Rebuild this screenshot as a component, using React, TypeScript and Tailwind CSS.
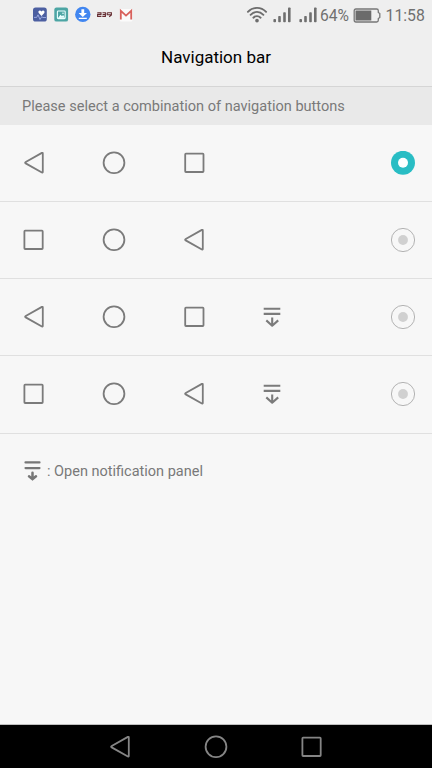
import React from "react";

type Kind = "back" | "home" | "recent" | "recentLeft" | "panel";

function Icon({ kind }: { kind: Kind }) {
  return (
    <svg
      viewBox="0 0 24 24"
      className="h-6 w-6 shrink-0"
      fill="none"
      stroke="currentColor"
      strokeWidth="1.8"
      strokeLinejoin="round"
      strokeLinecap="round"
    >
      {kind === "back" && <path d="M19.9 1.9 L3.7 11 Q2.5 11.7 3.7 12.4 L19.9 21.5 Q20.8 21.8 20.8 21 V2.4 Q20.8 1.6 19.9 1.9Z" />}
      {kind === "home" && <circle cx="12" cy="11.8" r="10.4" />}
      {kind === "recent" && <rect x="3.2" y="2.7" width="18.3" height="18.3" rx="0.7" />}
      {kind === "recentLeft" && <rect x="2.4" y="2.7" width="18.3" height="18.3" rx="0.7" />}
      {kind === "panel" && (
        <path strokeLinecap="butt" strokeWidth="2.1" d="M3.7 3.7 H20.3 M3.7 8.9 H20.3 M12.2 12.4 V21 M6.3 15.4 L12.2 20.7 L18.2 15.4" />
      )}
    </svg>
  );
}

function Radio({ on }: { on?: boolean }) {
  return (
    <svg viewBox="0 0 24 24" className="ml-auto h-6 w-6 shrink-0">
      {on ? (
        <>
          <circle cx="12" cy="11.8" r="12" fill="#29bdc4" />
          <circle cx="12" cy="11.8" r="5" fill="#fcffff" />
        </>
      ) : (
        <>
          <circle cx="12" cy="12" r="11.6" fill="none" stroke="#aaaaaa" strokeWidth="0.9" />
          <circle cx="12" cy="12" r="4.9" fill="#d0d0d0" />
        </>
      )}
    </svg>
  );
}

function Row({ icons, on, className = "h-[77px]" }: { icons: Kind[]; on?: boolean; className?: string }) {
  return (
    <div className={`flex shrink-0 items-center border-b border-[#e0e0e0] pr-[17px] pl-[22px] text-[#7b7b7b] ${className}`}>
      <div className="flex gap-14">
        {icons.map((k, i) => (
          <span key={i} className={i === 3 ? "-ml-0.5" : ""}>
            <Icon kind={k} />
          </span>
        ))}
      </div>
      <Radio on={on} />
    </div>
  );
}

function Signal({ className }: { className: string }) {
  return (
    <svg viewBox="0 0 18 16" className={`h-4 w-[18px] ${className}`} fill="#6f6f6f">
      <rect x="0.4" y="11.9" width="2.6" height="3.3" rx=".8" />
      <rect x="5.2" y="9" width="2.6" height="6.2" rx=".8" />
      <rect x="10.2" y="5.2" width="2.6" height="10" rx=".8" />
      <rect x="15" y="0.5" width="2.6" height="14.7" rx=".8" />
    </svg>
  );
}

function StatusBar() {
  return (
    <div className="flex h-[30px] items-center pl-8 text-[#707070]">
      <svg viewBox="0 0 110 20" className="h-5 w-[110px]">
        <rect x="1" y="2.6" width="13.8" height="14" rx="2.6" fill="#4c5fa1" />
        <path d="M9.5 11 L6.7 8.1 C5.4 5.7 8.3 4.6 9.5 6.5 C10.7 4.6 13.4 5.7 12.3 8Z" fill="#fff" />
        <path d="M2 12.4 H4.7 L6 9.8 L8 14.5 L9.7 11.7 L11 12.5 H14" stroke="#aab9ed" strokeWidth=".8" fill="none" />
        <rect x="22.3" y="2.6" width="13.8" height="14" rx="2.2" fill="#4ca5a4" />
        <rect x="25.4" y="6" width="7.8" height="7.6" rx=".8" fill="none" stroke="#eaffff" strokeWidth="1.1" />
        <path d="M26 13 L28.5 9.7 L30 11.3 L31.1 10 L33 12.7Z" fill="#eaffff" />
        <circle cx="31" cy="8.2" r=".8" fill="#eaffff" />
        <circle cx="50.8" cy="9.4" r="7.7" fill="#4186f0" />
        <path d="M49.4 4.3 H52.2 V8 H55 L50.8 12 L46.6 8 H49.4Z M46.8 12.8 H54.8 V14 H46.8Z" fill="#fff" />
        <g stroke="#652c31" strokeWidth="1.1" fill="none">
          <path d="M65.3 7.7 H69 V9.4 H65.6 V11.4 H69.4 M70.5 7.7 H73.4 V11.4 H70.3 M70.6 9.5 H73" />
          <path d="M75.2 7.7 H79.4 V10 L77.2 11.7 M75.2 7.7 V9.7 H79" />
        </g>
        <rect x="87.8" y="4" width="12.5" height="12.4" rx="1.2" fill="#fbfbfb" />
        <path d="M88.8 14.4 V5.8 L94 10.6 L99.2 5.8 V14.4" fill="none" stroke="#d8615c" strokeWidth="1.8" />
      </svg>
      <svg viewBox="0 0 22 18" className="ml-[104px] h-[18px] w-[22px]" fill="none" stroke="#6d6d6d" strokeWidth="1.9" strokeLinecap="round">
        <path d="M1.9 5.8 C7 .5 15 .5 20.1 5.8 M4.6 8.8 C8.4 4.9 13.6 4.9 17.4 8.8 M7.4 11.7 C9.5 9.7 12.5 9.7 14.6 11.7" />
        <circle cx="11" cy="14.6" r=".9" fill="#6d6d6d" />
      </svg>
      <Signal className="ml-[5px]" />
      <Signal className="ml-[8px]" />
      <span className="ml-[3px] w-[28px] pt-px text-[15.6px] leading-5 whitespace-nowrap">64%</span>
      <svg viewBox="0 0 28 15" className="ml-[5px] h-[15px] w-7">
        <path d="M2.9 1 H23.6 Q25.3 1 25.3 2.7 V4.5 L26.8 5.6 V9.4 L25.3 10.5 V12.3 Q25.3 14 23.6 14 H2.9 Q1.2 14 1.2 12.3 V2.7 Q1.2 1 2.9 1Z" fill="none" stroke="#777" strokeWidth="1.3" />
        <rect x="2.5" y="2.5" width="15.8" height="10" fill="#6b6b6b" />
      </svg>
      <span className="ml-[4.5px] pt-px text-[15.8px] leading-5 whitespace-nowrap">11:58</span>
    </div>
  );
}

export default function App() {
  return (
    <div className="flex h-[768px] w-[432px] flex-col overflow-hidden bg-[#f7f7f7] font-['Roboto',sans-serif] text-[#797979]">
      <header className="h-[87px] shrink-0 border-b border-[#d5d5d5] bg-[#efefef]">
        <StatusBar />
        <h1 className="pt-[15px] text-center text-[17px] leading-6 text-black">Navigation bar</h1>
      </header>
      <div className="flex h-[38px] shrink-0 items-center bg-[#e9e9e9] pt-px pl-[22px] text-[14.55px]">
        Please select a combination of navigation buttons
      </div>
      <Row icons={["back", "home", "recent"]} on />
      <Row icons={["recentLeft", "home", "back"]} />
      <Row icons={["back", "home", "recent", "panel"]} />
      <Row icons={["recentLeft", "home", "back", "panel"]} className="h-[78px] pb-px" />
      <div className="flex flex-1 items-start pt-[26px] pl-[24px] text-[14.5px] leading-6">
        <svg viewBox="0 0 17 22" className="mr-[6px] h-[22px] w-[17px]" fill="none" stroke="#777" strokeWidth="2.2" strokeLinecap="round">
          <path d="M1.5 2.4 H15.5 M1.5 8.1 H15.5" />
          <path strokeWidth="2.5" d="M8.5 12.8 V18.5 M5 16.2 L8.5 19.2 L12 16.2" />
        </svg>
        <span>: Open notification panel</span>
      </div>
      <nav className="flex h-11 shrink-0 items-center justify-center gap-[72px] border-t border-[#c0c0c0] bg-black text-[#858585]">
        <Icon kind="back" />
        <Icon kind="home" />
        <Icon kind="recentLeft" />
      </nav>
    </div>
  );
}
